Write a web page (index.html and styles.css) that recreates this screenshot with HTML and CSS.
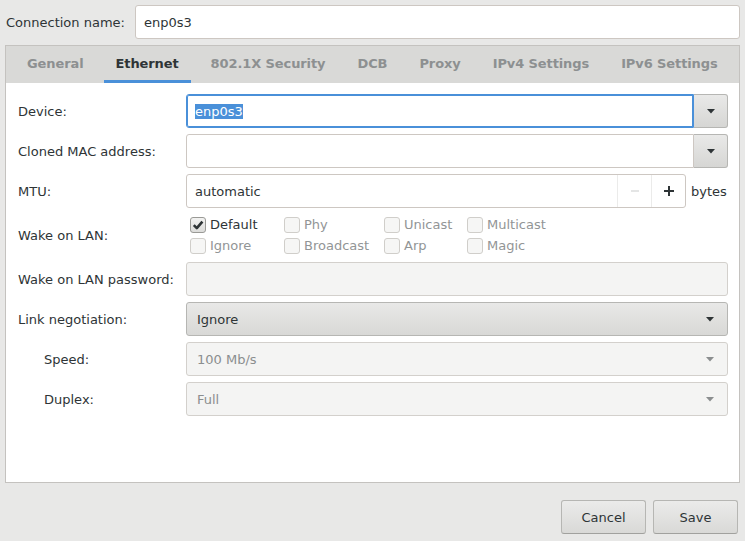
FILE: index.html
```html
<!DOCTYPE html>
<html>
<head>
<meta charset="utf-8">
<link rel="stylesheet" href="styles.css">
</head>
<body>
<div class="window">
  <div class="conn-row">
    <div class="conn-label">Connection name:</div>
    <div class="entry">enp0s3</div>
  </div>

  <div class="frame">
    <div class="tabs">
      <div class="tab">General</div>
      <div class="tab active">Ethernet</div>
      <div class="tab">802.1X Security</div>
      <div class="tab">DCB</div>
      <div class="tab">Proxy</div>
      <div class="tab">IPv4 Settings</div>
      <div class="tab">IPv6 Settings</div>
    </div>

    <div class="content">
      <div class="label">Device:</div>
      <div class="combo-entry">
        <div class="entry joined focused"><span class="sel">enp0s3</span></div>
        <div class="drop-btn"><svg width="8" height="5" viewBox="0 0 8 5"><polygon points="0,0 8,0 4,4.5" fill="#2e3436"/></svg></div>
      </div>

      <div class="label">Cloned MAC address:</div>
      <div class="combo-entry">
        <div class="entry joined"></div>
        <div class="drop-btn"><svg width="8" height="5" viewBox="0 0 8 5"><polygon points="0,0 8,0 4,4.5" fill="#2e3436"/></svg></div>
      </div>

      <div class="label">MTU:</div>
      <div class="mtu-row">
        <div class="spin">
          <div class="spin-text">automatic</div>
          <div class="spin-btn"><svg width="10" height="10" viewBox="0 0 10 10"><rect x="1" y="4.5" width="8" height="1" fill="#c9cbcc"/></svg></div>
          <div class="spin-btn"><svg width="12" height="12" viewBox="0 0 12 12"><rect x="1" y="5" width="10" height="2" fill="#2e3436"/><rect x="5" y="1" width="2" height="10" fill="#2e3436"/></svg></div>
        </div>
        <div class="unit">bytes</div>
      </div>

      <div class="label">Wake on LAN:</div>
      <div class="checks">
        <div class="check"><span class="box checked"><svg width="12" height="12" viewBox="0 0 12 12"><path d="M1.8 6.2 L4.8 9.2 L10.4 2.6" fill="none" stroke="#2e3436" stroke-width="2.6" stroke-linejoin="round"/></svg></span><span class="ctext">Default</span></div>
        <div class="check off"><span class="box"></span><span class="ctext">Phy</span></div>
        <div class="check off"><span class="box"></span><span class="ctext">Unicast</span></div>
        <div class="check off"><span class="box"></span><span class="ctext">Multicast</span></div>
        <div class="check off"><span class="box"></span><span class="ctext">Ignore</span></div>
        <div class="check off"><span class="box"></span><span class="ctext">Broadcast</span></div>
        <div class="check off"><span class="box"></span><span class="ctext">Arp</span></div>
        <div class="check off"><span class="box"></span><span class="ctext">Magic</span></div>
      </div>

      <div class="label">Wake on LAN password:</div>
      <div class="entry disabled"></div>

      <div class="label">Link negotiation:</div>
      <div class="combo">
        <span>Ignore</span>
        <svg width="8" height="5" viewBox="0 0 8 5"><polygon points="0,0 8,0 4,4.5" fill="#2e3436"/></svg>
      </div>

      <div class="label sub">Speed:</div>
      <div class="combo disabled">
        <span>100 Mb/s</span>
        <svg width="8" height="5" viewBox="0 0 8 5"><polygon points="0,0 8,0 4,4.5" fill="#8b8e8f"/></svg>
      </div>

      <div class="label sub">Duplex:</div>
      <div class="combo disabled">
        <span>Full</span>
        <svg width="8" height="5" viewBox="0 0 8 5"><polygon points="0,0 8,0 4,4.5" fill="#8b8e8f"/></svg>
      </div>
    </div>
  </div>

  <div class="actions">
    <div class="button">Cancel</div>
    <div class="button">Save</div>
  </div>
</div>
</body>
</html>
```

FILE: styles.css
```css
html, body {
  margin: 0;
  padding: 0;
}
body {
  background: #e8e8e7;
  font-family: "DejaVu Sans", sans-serif;
  font-size: 13px;
  color: #2e3436;
}
.window {
  height: 541px;
  box-sizing: border-box;
  padding: 5px 5px 7px 5px;
  display: flex;
  flex-direction: column;
}
.conn-row {
  display: flex;
  align-items: center;
  height: 34px;
}
.conn-label {
  width: 130px;
  padding-left: 1px;
  box-sizing: border-box;
}
.entry {
  flex: 1;
  height: 34px;
  box-sizing: border-box;
  border: 1px solid #cdc7c2;
  border-radius: 3px;
  background: #ffffff;
  padding: 0 8px;
  display: flex;
  align-items: center;
}
.entry.disabled {
  background: #f4f4f3;
  border-color: #d3d0cc;
}
.frame {
  margin-top: 6px;
  flex: 1;
  border: 1px solid #c4c2bf;
  background: #ffffff;
  display: flex;
  flex-direction: column;
}
.tabs {
  display: flex;
  height: 37px;
  background: #d9d9d7;
  padding-left: 5px;
  box-sizing: border-box;
  overflow: hidden;
}
.tab {
  padding: 0 12px;
  margin: 0 4px;
  display: flex;
  align-items: center;
  font-weight: bold;
  color: #8d9091;
  border-bottom: 3px solid transparent;
  white-space: nowrap;
  flex-shrink: 0;
  letter-spacing: -0.1px;
}
.tab.active {
  color: #2e3436;
  border-bottom-color: #4a90d9;
}
.content {
  padding: 11px 11px 0 12px;
  display: grid;
  grid-template-columns: 168px 1fr;
  row-gap: 6px;
  align-items: center;
}
.label {
  white-space: nowrap;
}
.label.sub {
  padding-left: 26px;
}
.combo-entry {
  display: flex;
  height: 34px;
}
.entry.joined {
  border-radius: 3px 0 0 3px;
}
.entry.focused {
  border-color: #4a90d9;
  box-shadow: inset 0 0 0 1px #4a90d9;
}
.sel {
  background: #4a90d9;
  color: #ffffff;
}
.drop-btn {
  width: 34px;
  box-sizing: border-box;
  border: 1px solid #b6b6b3;
  border-left: none;
  border-radius: 0 3px 3px 0;
  background: linear-gradient(#e9e9e8, #d6d6d4);
  display: flex;
  align-items: center;
  justify-content: center;
}
.mtu-row {
  display: flex;
  align-items: center;
  gap: 5px;
}
.spin {
  flex: 1;
  height: 34px;
  box-sizing: border-box;
  border: 1px solid #cdc7c2;
  border-radius: 3px;
  background: #ffffff;
  display: flex;
}
.spin-text {
  flex: 1;
  padding: 0 8px;
  display: flex;
  align-items: center;
}
.spin-btn {
  width: 33px;
  border-left: 1px solid #ebebea;
  display: flex;
  align-items: center;
  justify-content: center;
}
.unit {
  width: 37px;
}
.checks {
  display: grid;
  grid-template-columns: 94px 100px 83px auto;
  grid-auto-rows: 21px;
  padding-left: 4px;
  align-items: center;
}
.check {
  display: flex;
  align-items: center;
  gap: 4px;
}
.box {
  width: 16px;
  height: 16px;
  box-sizing: border-box;
  border: 1px solid #d0ceca;
  border-radius: 3px;
  background: #f6f6f5;
  display: flex;
  align-items: center;
  justify-content: center;
}
.box.checked {
  border-color: #9a9a96;
  background: linear-gradient(#f2f2f1, #dcdcda);
}
.check.off .ctext {
  color: #929596;
}
.combo {
  height: 34px;
  box-sizing: border-box;
  border: 1px solid #b6b6b3;
  border-radius: 3px;
  background: linear-gradient(#e8e8e7, #d8d8d6);
  display: flex;
  align-items: center;
  justify-content: space-between;
  padding: 0 13px 0 10px;
}
.combo.disabled {
  background: #f4f4f3;
  border-color: #d3d0cc;
  color: #8b8e8f;
}
.actions {
  display: flex;
  justify-content: flex-end;
  gap: 7px;
  margin-top: 17px;
  padding-right: 2px;
}
.button {
  width: 85px;
  height: 34px;
  box-sizing: border-box;
  border: 1px solid #b6b6b3;
  border-bottom-color: #a1a19e;
  border-radius: 3px;
  background: linear-gradient(#ebebea, #d9d9d7);
  display: flex;
  align-items: center;
  justify-content: center;
}
```
